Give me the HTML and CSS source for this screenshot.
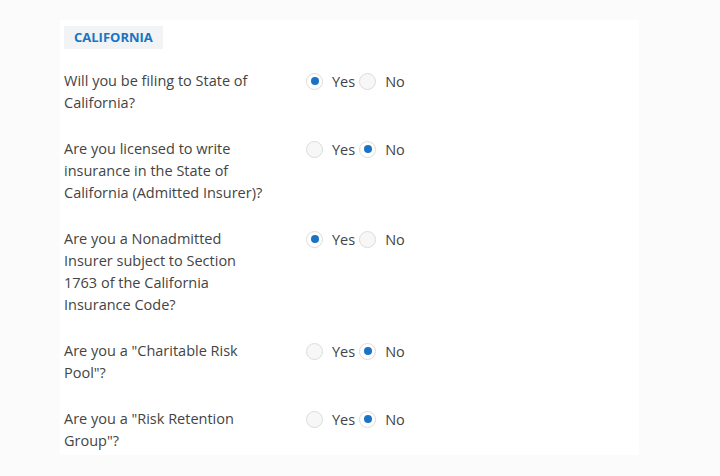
FILE: index.html
```html
<!DOCTYPE html>
<html>
<head>
<meta charset="utf-8">
<link rel="stylesheet" href="styles.css">
</head>
<body>
<div class="panel">
  <div class="badge">CALIFORNIA</div>
  <div class="rows">
    <div class="row">
      <div class="q">Will you be filing to State of California?</div>
      <div class="opts">
        <span class="radio on"></span><span class="lbl">Yes</span>
        <span class="radio"></span><span class="lbl">No</span>
      </div>
    </div>
    <div class="row">
      <div class="q">Are you licensed to write insurance in the State of California (Admitted Insurer)?</div>
      <div class="opts">
        <span class="radio"></span><span class="lbl">Yes</span>
        <span class="radio on"></span><span class="lbl">No</span>
      </div>
    </div>
    <div class="row">
      <div class="q">Are you a Nonadmitted Insurer subject to Section 1763 of the California Insurance Code?</div>
      <div class="opts">
        <span class="radio on"></span><span class="lbl">Yes</span>
        <span class="radio"></span><span class="lbl">No</span>
      </div>
    </div>
    <div class="row">
      <div class="q">Are you a "Charitable Risk Pool"?</div>
      <div class="opts">
        <span class="radio"></span><span class="lbl">Yes</span>
        <span class="radio on"></span><span class="lbl">No</span>
      </div>
    </div>
    <div class="row">
      <div class="q">Are you a "Risk Retention Group"?</div>
      <div class="opts">
        <span class="radio"></span><span class="lbl">Yes</span>
        <span class="radio on"></span><span class="lbl">No</span>
      </div>
    </div>
  </div>
</div>
</body>
</html>
```
FILE: styles.css
```css
html, body {
  margin: 0;
  padding: 0;
  background: #fbfbfb;
}
body {
  font-family: "Open Sans", "Noto Sans", sans-serif;
  color: #444;
  padding: 20px 0 0 60px;
  width: 720px;
  height: 476px;
  box-sizing: border-box;
}
.panel {
  width: 579px;
  height: 435px;
  background: #fff;
  padding: 5px 0 0 4px;
  box-sizing: border-box;
}
.badge {
  display: inline-block;
  background: #f1f3f5;
  color: #1a74c2;
  font-weight: 700;
  font-size: 13px;
  padding: 0 10px;
  height: 23px;
  line-height: 23px;
}
.rows {
  display: flex;
  flex-direction: column;
  gap: 24px;
  margin-top: 21px;
}
.row {
  display: flex;
  align-items: flex-start;
}
.q {
  width: 203px;
  margin-right: 39px;
  font-size: 14.5px;
  line-height: 22px;
}
.opts {
  display: flex;
  align-items: center;
  height: 22px;
  font-size: 14.5px;
}
.radio {
  width: 17px;
  height: 17px;
  border-radius: 50%;
  border: 1px solid #dcdcdc;
  background: #f7f7f7;
  box-sizing: border-box;
  display: flex;
  align-items: center;
  justify-content: center;
}
.radio.on {
  background: #fff;
}
.radio.on::after {
  content: "";
  width: 8px;
  height: 8px;
  border-radius: 50%;
  background: #1a74c2;
}
.lbl {
  margin-left: 9px;
  margin-right: 4px;
}
```
